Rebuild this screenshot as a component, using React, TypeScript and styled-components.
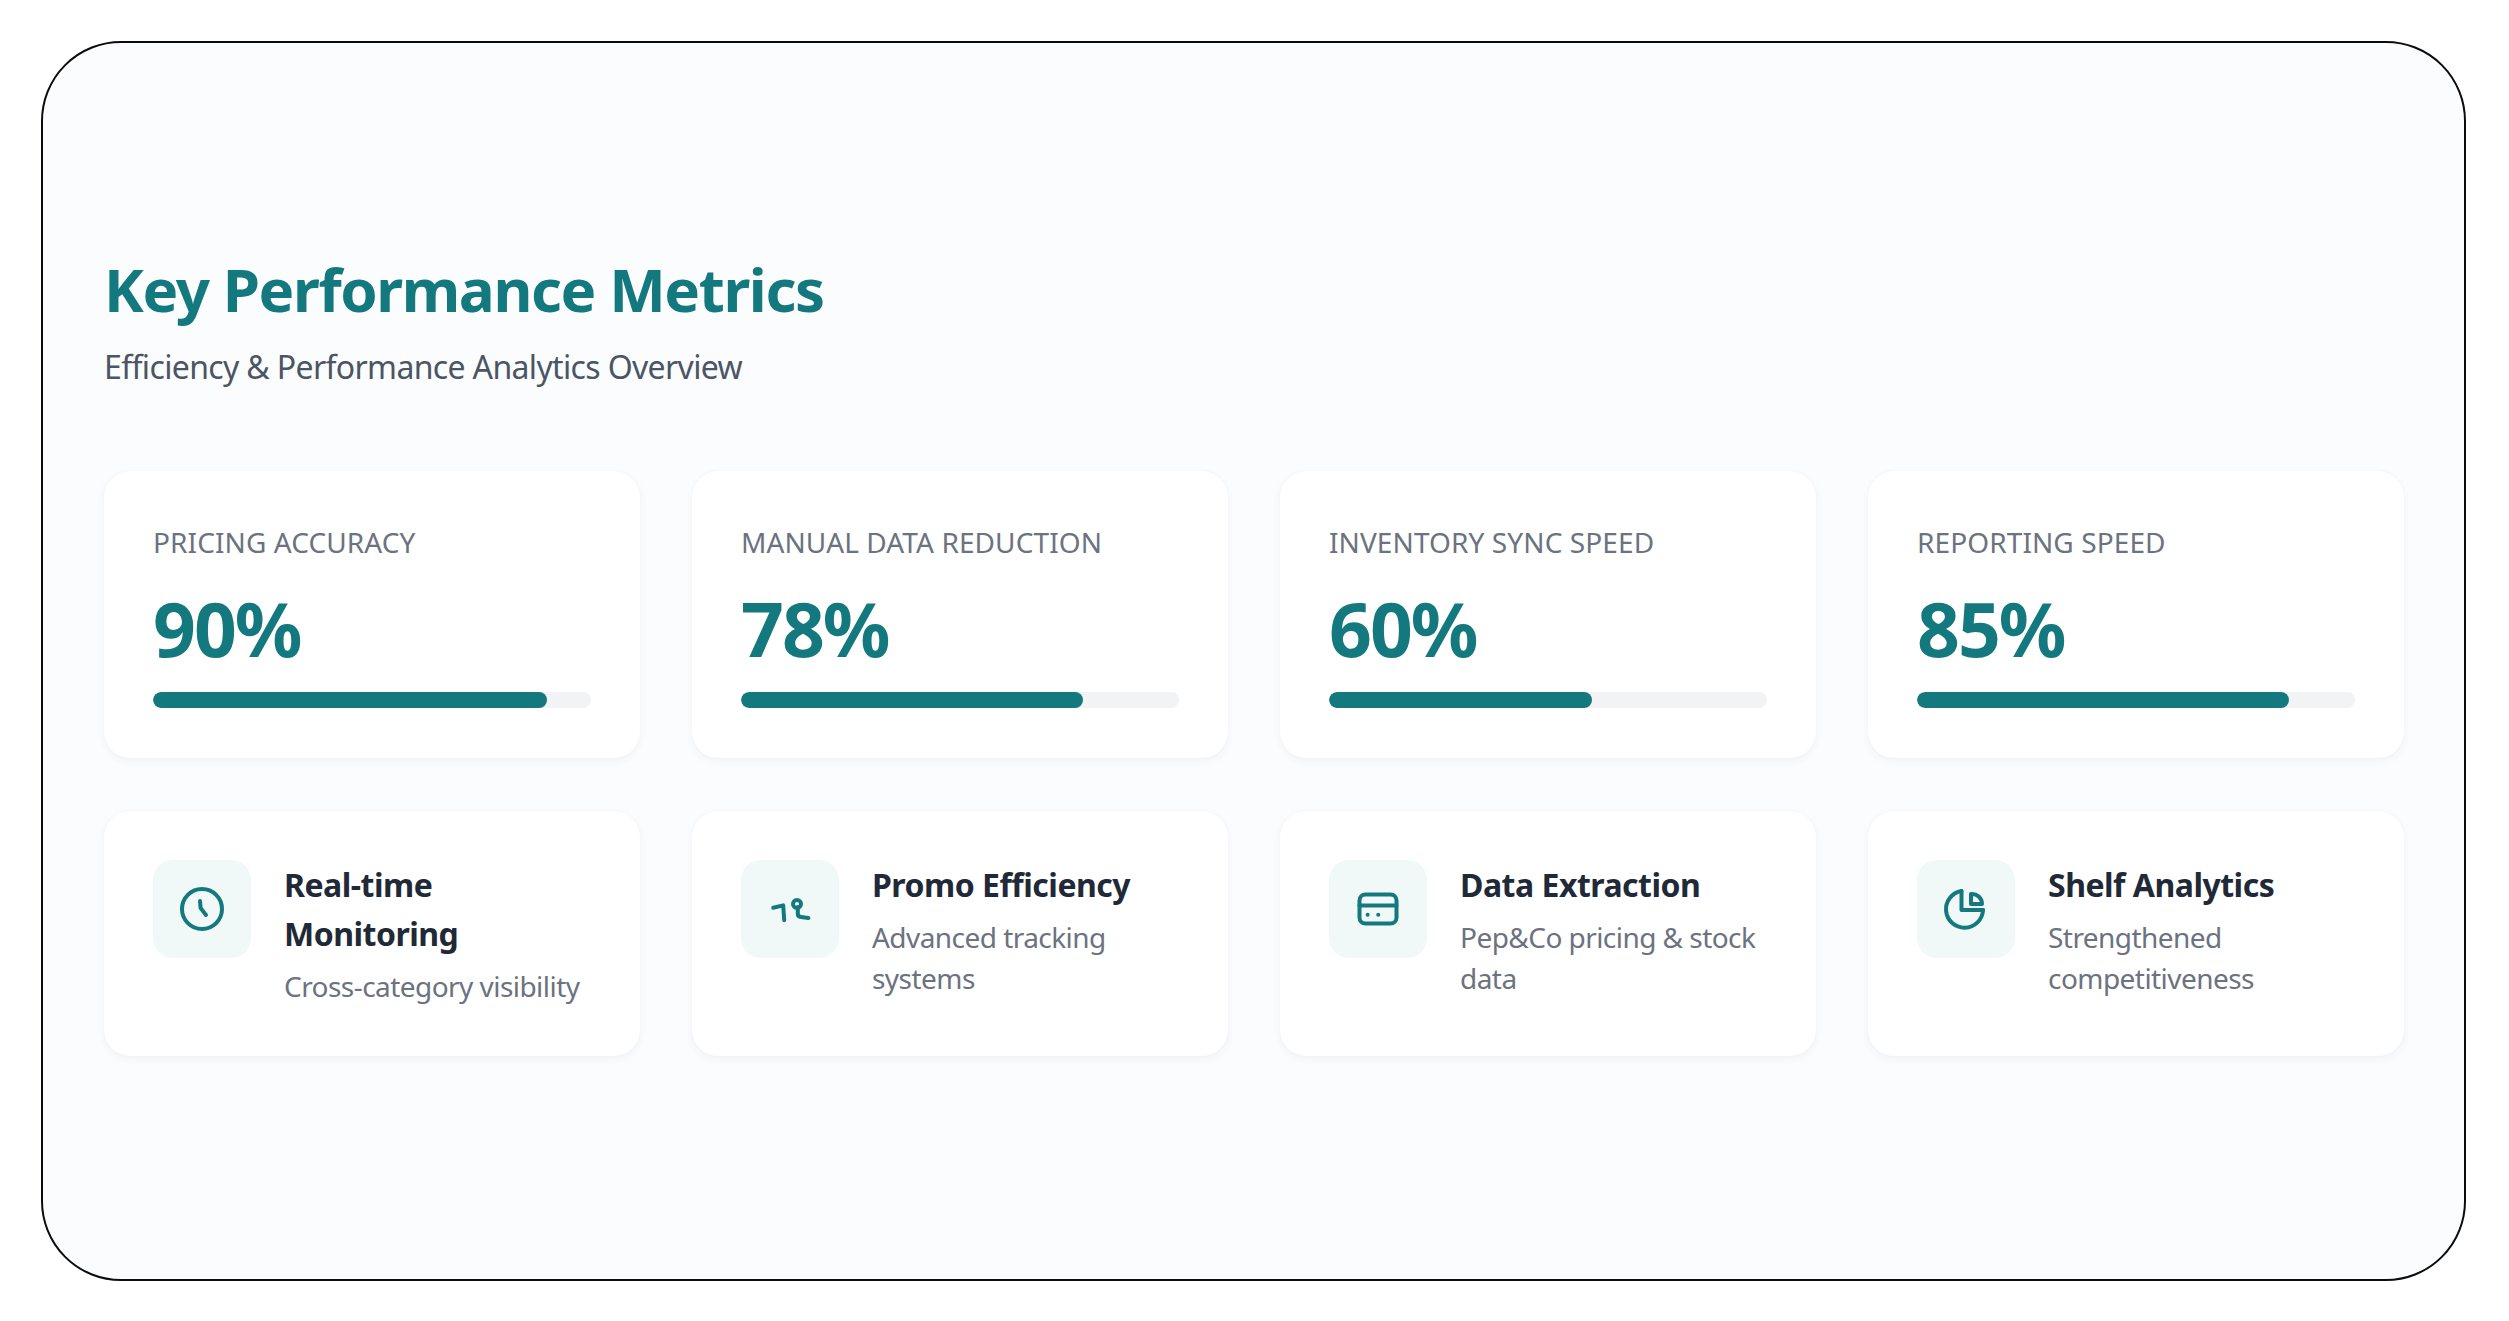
import React from 'react'
import styled, { createGlobalStyle } from 'styled-components'

const TEAL = '#14797f'
const FONT = '"Noto Sans", "Open Sans", "Liberation Sans", sans-serif'

const GlobalStyle = createGlobalStyle`
  html, body {
    margin: 0;
    padding: 0;
    background: #fff;
  }
`

const Page = styled.div`
  width: 2509px;
  height: 1321px;
  box-sizing: border-box;
  padding: 41px 43px 40px 41px;
  background: #fff;
  font-family: ${FONT};
`

const Frame = styled.section`
  height: 100%;
  box-sizing: border-box;
  border: 2px solid #0c0c0c;
  border-radius: 80px;
  background: #fbfcfe;
  padding: 210px 61px 0;
`

const Title = styled.h1`
  margin: 0;
  color: ${TEAL};
  font-size: 60px;
  line-height: 72px;
  font-weight: 700;
  letter-spacing: -1.4px;
`

const Subtitle = styled.p`
  margin: 20px 0 0;
  color: #4b5563;
  font-size: 32px;
  line-height: 44px;
  font-weight: 400;
  letter-spacing: -0.65px;
`

const Grid = styled.div`
  display: grid;
  grid-template-columns: repeat(4, 536px);
  gap: 51px 52px;
`

const Metrics = styled(Grid)`
  margin-top: 82px;
  margin-bottom: 53px;
`

const Card = styled.div`
  box-sizing: border-box;
  background: #fff;
  border-radius: 26px;
  box-shadow: 0 3px 8px rgba(30, 50, 70, 0.05), 0 0 2px rgba(30, 50, 70, 0.04);
  padding: 49px;
`

const MetricCard = styled(Card)`
  height: 287px;
`

const MetricLabel = styled.div`
  margin-top: 3px;
  color: #6b7280;
  font-size: 28px;
  line-height: 38px;
  letter-spacing: 0.1px;
`

const MetricValue = styled.div`
  margin-top: 21px;
  color: ${TEAL};
  font-size: 75px;
  line-height: 92px;
  font-weight: 700;
  letter-spacing: -2px;
`

const Track = styled.div`
  margin-top: 18px;
  height: 16px;
  border-radius: 8px;
  background: #f1f3f4;
  overflow: hidden;
`

const Fill = styled.div`
  height: 100%;
  border-radius: 8px;
  background: ${TEAL};
`

const FeatureCard = styled(Card)`
  height: 245px;
  display: flex;
  align-items: flex-start;
  gap: 33px;
`

const IconBox = styled.div`
  flex: none;
  width: 98px;
  height: 98px;
  border-radius: 20px;
  background: #f1f8f8;
  color: ${TEAL};
  display: flex;
  align-items: center;
  justify-content: center;
`

const FeatureTitle = styled.div`
  color: #1f2937;
  font-size: 32px;
  line-height: 49px;
  font-weight: 700;
  letter-spacing: -0.5px;
`

const FeatureText = styled.div`
  margin-top: 8px;
  color: #6b7280;
  font-size: 28px;
  line-height: 41px;
  letter-spacing: -0.55px;
`

const IconSvg = styled.svg.attrs({
  viewBox: '0 0 24 24',
  fill: 'none',
  stroke: 'currentColor',
  strokeWidth: 2,
  strokeLinecap: 'round',
  strokeLinejoin: 'round',
})`
  width: 48px;
  height: 48px;
`

const ClockIcon = () => (
  <IconSvg>
    <circle cx="12" cy="12" r="10" />
    <path d="M11 8 11.3 11.5 14 15" />
  </IconSvg>
)

const PromoIcon = () => (
  <IconSvg>
    <path d="M3.6 11.4 8.6 10.2 9.1 17.6" />
    <circle cx="15.5" cy="9.5" r="2" />
    <path d="M15.9 11v3.2q0 1.6 1.6 1.8L21.2 16.5" />
  </IconSvg>
)

const CardIcon = () => (
  <IconSvg>
    <rect x="2.75" y="4.75" width="18.5" height="14.5" rx="3" />
    <path d="M2.75 10.2h18.5" />
    <path d="M6.8 14.9h.01M12.1 14.9h.01" />
  </IconSvg>
)

const PieIcon = () => (
  <IconSvg>
    <path d="M9.75 3a9.25 9.25 0 1 0 10.75 9.5" />
    <path d="M9.75 3v9.5h10.75" />
    <path d="M14.5 4.5a5 5 0 0 1 5.5 5h-5.5z" />
  </IconSvg>
)

const metrics = [
  { label: 'PRICING ACCURACY', value: 90 },
  { label: 'MANUAL DATA REDUCTION', value: 78 },
  { label: 'INVENTORY SYNC SPEED', value: 60 },
  { label: 'REPORTING SPEED', value: 85 },
]

const features = [
  { title: 'Real-time Monitoring', text: 'Cross-category visibility', icon: <ClockIcon /> },
  { title: 'Promo Efficiency', text: 'Advanced tracking systems', icon: <PromoIcon /> },
  { title: 'Data Extraction', text: 'Pep&Co pricing & stock data', icon: <CardIcon /> },
  { title: 'Shelf Analytics', text: 'Strengthened competitiveness', icon: <PieIcon /> },
]

const App = () => (
  <Page>
    <GlobalStyle />
    <Frame>
      <Title>Key Performance Metrics</Title>
      <Subtitle>Efficiency &amp; Performance Analytics Overview</Subtitle>
      <Metrics>
        {metrics.map((m) => (
          <MetricCard key={m.label}>
            <MetricLabel>{m.label}</MetricLabel>
            <MetricValue>{m.value}%</MetricValue>
            <Track>
              <Fill style={{ width: `${m.value}%` }} />
            </Track>
          </MetricCard>
        ))}
      </Metrics>
      <Grid>
        {features.map((f) => (
          <FeatureCard key={f.title}>
            <IconBox>{f.icon}</IconBox>
            <div>
              <FeatureTitle>{f.title}</FeatureTitle>
              <FeatureText>{f.text}</FeatureText>
            </div>
          </FeatureCard>
        ))}
      </Grid>
    </Frame>
  </Page>
)

export default App
